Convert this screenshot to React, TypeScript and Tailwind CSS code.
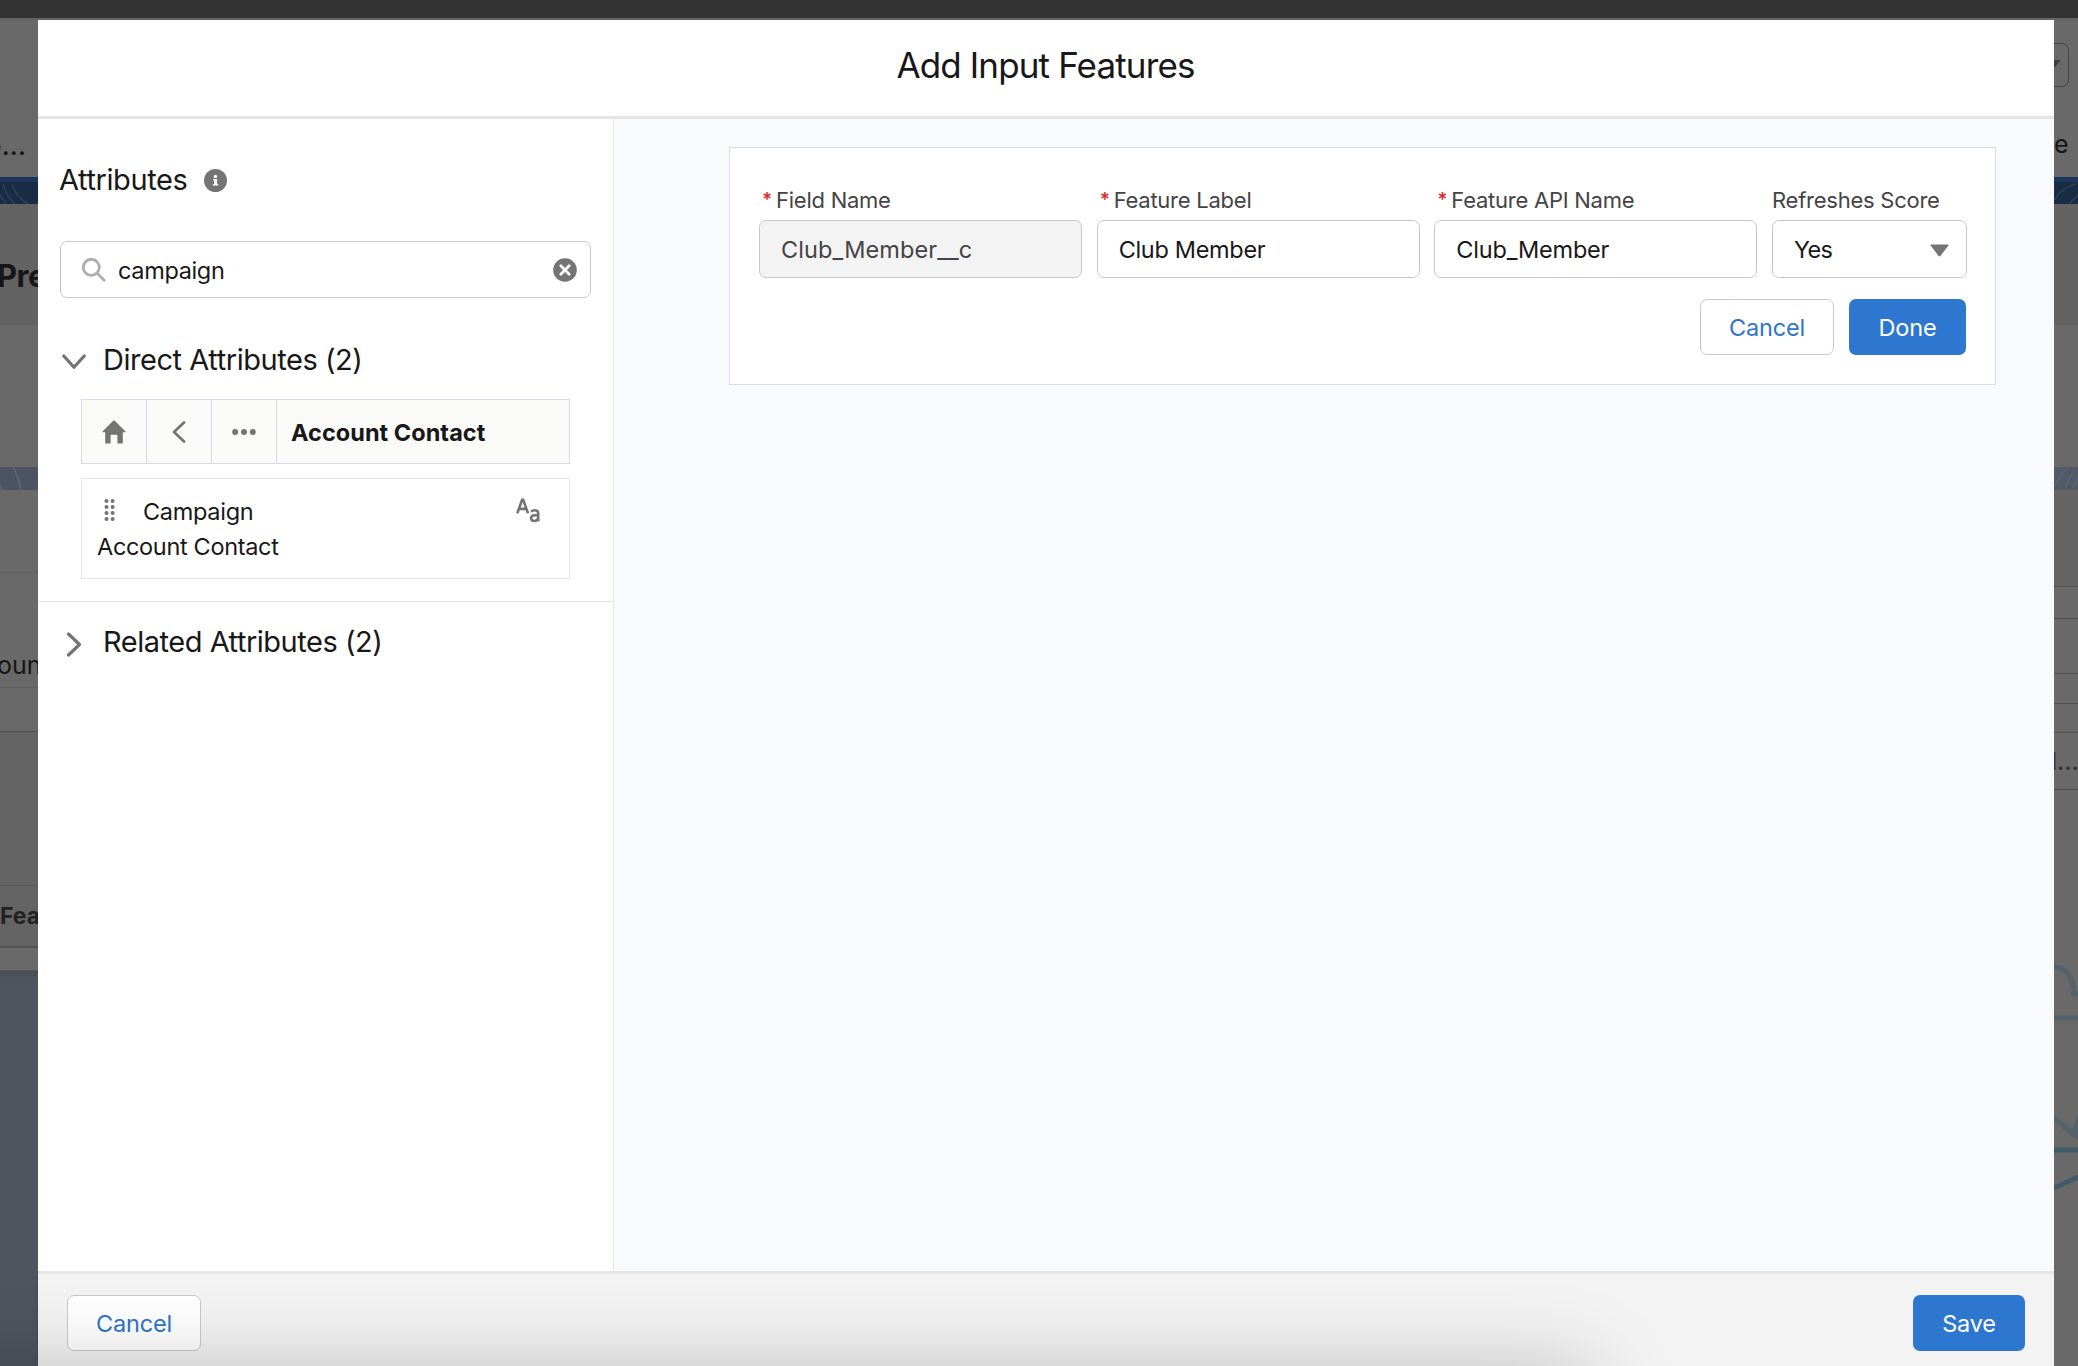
import type { ReactNode } from "react";

function InfoIcon() {
  return (
    <svg width="23" height="23" viewBox="0 0 23 23">
      <circle cx="11.5" cy="11.5" r="11.5" fill="#747474" />
      <circle cx="11.4" cy="7.4" r="1.7" fill="#fff" />
      <path d="M9.2 10h3.9v5h1.1v1.6H8.9V15h1.3v-3.4h-1z" fill="#fff" />
    </svg>
  );
}

function SearchIcon() {
  return (
    <svg width="24" height="24" viewBox="0 0 24 24" fill="none" stroke="#aeaeae">
      <circle cx="9.3" cy="9.3" r="8" strokeWidth="2.8" />
      <path d="M15.2 15.2l7 7" strokeWidth="2.8" strokeLinecap="round" />
    </svg>
  );
}

function ClearIcon() {
  return (
    <svg width="24" height="24" viewBox="0 0 24 24">
      <circle cx="12" cy="12" r="11.8" fill="#747474" />
      <path d="M7.8 7.8l8.4 8.4M16.2 7.8l-8.4 8.4" stroke="#fff" strokeWidth="2.7" strokeLinecap="round" />
    </svg>
  );
}

function HomeIcon() {
  return (
    <svg width="24" height="24" viewBox="0 0 24 24" fill="#747474">
      <path d="M11.2.8a1.1 1.1 0 0 1 1.6 0L23.3 11.3c.4.4.2.9-.4.9h-2.1v10.6c0 .4-.2.6-.6.6h-4.8v-8c0-.4-.2-.6-.6-.6H9.2c-.4 0-.6.2-.6.6v8H3.8c-.4 0-.6-.2-.6-.6V12.2H1.1c-.6 0-.8-.5-.4-.9z" />
    </svg>
  );
}

function TextTypeIcon() {
  return (
    <svg width="24" height="25" viewBox="0 0 24 25" fill="none" stroke="#747474" strokeWidth="2.6">
      <path d="M1.3 15.2L6.1 1.9h1.1L12 15.2M3 10.9h7.3" />
      <path d="M15 13.6c1-.9 2.3-1.3 3.7-1.3 2.3 0 3.5 1.2 3.5 3.3v8M22.2 17.2h-3.4c-2.4 0-3.7 1-3.7 2.9 0 1.8 1.3 2.9 3.2 2.9 2.2 0 3.9-1.4 3.9-3.4" />
    </svg>
  );
}

function DragDots() {
  return (
    <svg width="12" height="24" viewBox="0 0 12 24" fill="#747474">
      {[2, 8, 14, 20].map((y) => (
        <g key={y}>
          <circle cx="2.5" cy={y} r="2" />
          <circle cx="8.6" cy={y} r="2" />
        </g>
      ))}
    </svg>
  );
}

function Field({ label, required = true, children }: { label: string; required?: boolean; children: ReactNode }) {
  return (
    <div className="flex min-w-0 flex-col gap-[5px]">
      <div className="flex h-[30px] items-center whitespace-nowrap text-[22px] leading-[30px] tracking-[-0.25px] text-[#444444]">
        {required && <span className="mr-[5px] ml-[3px] w-[9px] text-[19px] font-semibold text-[#d92d2a]">*</span>}
        <span>{label}</span>
      </div>
      {children}
    </div>
  );
}

const control = "flex h-[58px] items-center rounded-[7px] border border-[#c9c9c9] px-[21px] pt-[2px] text-[23.5px]";
const button = "flex h-[56px] items-center justify-center rounded-[7px] pt-[2px] text-[23.5px] tracking-[-0.2px]";

function LeftBackdrop() {
  return (
    <div className="flex w-[38px] shrink-0 flex-col overflow-hidden bg-[#696969] whitespace-nowrap text-[#161616]">
      <div className="flex h-[157px] shrink-0 items-end justify-end pr-[12px] pb-[13px] text-[26px] leading-[36px] font-medium tracking-[0.2px]">
        <span>o...</span>
      </div>
      <div className="h-[5px] shrink-0 bg-[#1b365e]" />
      <svg className="h-[22px] shrink-0 bg-[#1a2b45]" width="38" height="22" fill="none" stroke="#2d4054" strokeWidth="1.5">
        <path d="M-3 8l9 14M3 2q4 14 12 20M12 2q5 15 17 20" />
      </svg>
      <div className="h-[121px] shrink-0 bg-[#636363] pt-[52px] text-[31px] leading-[40px] font-bold tracking-[-0.5px]">
        <span className="-ml-[3px]">Pre</span>
      </div>
      <div className="h-[142px] shrink-0" />
      <svg className="h-[23px] shrink-0 bg-[#4c5362]" width="38" height="23" fill="none" stroke="#5d6270" strokeWidth="2">
        <path d="M13 0q5 8 8 23M-2 15l4 8" />
      </svg>
      <div className="h-[83px] shrink-0 border-b border-[#5f5f5f]" />
      <div className="h-[115px] shrink-0 border-b border-[#5f5f5f] pt-[74px] text-[25px] leading-[36px]">
        <span className="-ml-[3px]">oun</span>
      </div>
      <div className="h-[44px] shrink-0 border-b border-[#505050]" />
      <div className="h-[154px] shrink-0 border-b border-[#5c5c5c] bg-[#646464]" />
      <div className="h-[62px] shrink-0 border-b-2 border-[#535353] bg-[#646464] pt-[14px] text-[23px] leading-[32px] font-bold text-[#222222]">
        Fea
      </div>
      <div className="h-[23px] shrink-0 border-b border-[#555555]" />
      <div className="grow bg-gradient-to-b from-[#484c56] to-[#4f545f] to-[8px]" />
    </div>
  );
}

function RightBackdrop() {
  return (
    <div className="flex w-[24px] shrink-0 flex-col overflow-hidden bg-[#696969] text-[#161616]">
      <div className="h-[157px] shrink-0 pt-[23px]">
        <div className="-ml-[20px] flex h-[44px] w-[35px] items-center justify-end rounded-[7px] border border-[#454545] pr-[7px]">
          <svg width="18" height="10" viewBox="0 0 18 10">
            <path d="M0 0h18L9 10z" fill="#3e3e3e" />
          </svg>
        </div>
        <div className="mt-[39px] text-[25px] leading-[36px]">e</div>
      </div>
      <div className="h-[5px] shrink-0 bg-[#1b365e]" />
      <svg className="h-[22px] shrink-0 bg-[#1a2b45]" width="24" height="22" fill="none" stroke="#2d4054" strokeWidth="1.5">
        <path d="M0 18Q9 5 22 2M15 22l9-9" />
      </svg>
      <div className="h-[121px] shrink-0 bg-[#636363]" />
      <div className="h-[142px] shrink-0" />
      <svg className="h-[23px] shrink-0 bg-[#525967]" width="24" height="23" fill="none" stroke="#5d6370" strokeWidth="1.5">
        <path d="M1 19Q6 8 13 1M12 19L20 3M19 21l5-12" />
      </svg>
      <div className="h-[97px] shrink-0 border-b border-[#505050] bg-[#646464]" />
      <div className="h-[32px] shrink-0 border-b border-[#505050]" />
      <div className="h-[55px] shrink-0 border-b border-[#505050]" />
      <div className="h-[30px] shrink-0 border-b border-[#505050]" />
      <div className="h-[29px] shrink-0 border-b border-[#505050]" />
      <div className="flex h-[57px] shrink-0 items-center border-b border-[#505050] pt-[1px] text-[24px] font-medium text-[#333333]">
        <span className="-ml-[3px] whitespace-nowrap">l...</span>
      </div>
      <svg className="shrink-0" width="24" height="576" fill="none" strokeWidth="5">
        <g stroke="#55626c">
          <path d="M0 177q19 1 20 27h6" />
          <path d="M0 228h24" />
          <path d="M0 328l24 20" />
        </g>
        <path d="M24 324l-6 16 6 10z" fill="#55626c" />
        <g stroke="#425a69">
          <path d="M0 360h24" />
          <path d="M0 398l24-11" />
        </g>
      </svg>
    </div>
  );
}

function Sidebar() {
  return (
    <aside className="flex w-[576px] shrink-0 flex-col border-r border-[#e5e5e5] bg-white pt-[41px]">
      <div className="flex h-[40px] items-center pl-[21px] text-[29px] leading-[40px] tracking-[-0.4px]">
        <h2>Attributes</h2>
        <span className="ml-[17px]"><InfoIcon /></span>
      </div>
      <div className="mr-[22px] ml-[22px] mt-[41px] flex h-[57px] items-center rounded-[7px] border border-[#c9c9c9] pr-[13px] pl-[21px]">
        <SearchIcon />
        <span className="ml-[12px] grow pt-[2px] text-[23.5px] tracking-[-0.35px]">campaign</span>
        <ClearIcon />
      </div>
      <div className="mt-[42px] flex h-[40px] items-center pl-[24px] text-[29px] leading-[40px] tracking-[-0.45px]">
        <svg className="mt-[3px]" width="24" height="16" fill="none" stroke="#747474" strokeWidth="3.2" strokeLinecap="round" strokeLinejoin="round">
          <path d="M1.8 2L12 13.3 22.2 2" />
        </svg>
        <h3 className="ml-[17px]">Direct Attributes (2)</h3>
      </div>
      <div className="mr-[43px] ml-[43px] mt-[19px] flex h-[65px] border border-[#d8dae4] bg-[#fafaf9]">
        <div className="flex w-[65px] items-center justify-center border-r border-[#d8dae4]"><HomeIcon /></div>
        <div className="flex w-[65px] items-center justify-center border-r border-[#d8dae4]">
          <svg width="14" height="22" fill="none" stroke="#747474" strokeWidth="2.7" strokeLinecap="round" strokeLinejoin="round">
            <path d="M12 1.5L2 11l10 9.5" />
          </svg>
        </div>
        <div className="flex w-[65px] items-center justify-center border-r border-[#d8dae4]">
          <svg width="24" height="8" fill="#747474">
            <circle cx="3.2" cy="4" r="3" />
            <circle cx="12" cy="4" r="3" />
            <circle cx="20.8" cy="4" r="3" />
          </svg>
        </div>
        <div className="flex items-center pt-[2px] pl-[14px] text-[23.5px] font-bold tracking-[0.04px]">Account Contact</div>
      </div>
      <div className="mr-[43px] ml-[43px] mt-[14px] flex h-[101px] flex-col border border-[#e5e5e5] pt-[15px] text-[23.5px] leading-[35px]">
        <div className="flex h-[35px] items-start pr-[29px] pl-[22px]">
          <span className="mt-[5px]"><DragDots /></span>
          <span className="ml-[27px] grow tracking-[-0.3px]">Campaign</span>
          <span className="mt-[4px]"><TextTypeIcon /></span>
        </div>
        <div className="pl-[15px] tracking-[-0.33px]">Account Contact</div>
      </div>
      <div className="mt-[22px] h-px bg-[#e5e5e5]" />
      <div className="mt-[20px] flex h-[40px] items-center pl-[28px] text-[29px] leading-[40px] tracking-[-0.48px]">
        <svg className="mt-[5px]" width="16" height="25" fill="none" stroke="#747474" strokeWidth="3.2" strokeLinecap="round" strokeLinejoin="round">
          <path d="M2.5 2L13.5 12.5 2.5 23" />
        </svg>
        <h3 className="ml-[21px]">Related Attributes (2)</h3>
      </div>
    </aside>
  );
}

export default function App() {
  return (
    <div className="relative flex h-[1366px] w-[2078px] flex-col overflow-hidden bg-[#696969] font-['Inter',sans-serif] text-[#181818]">
      <div className="h-[20px] shrink-0 border-b-2 border-[#646464] bg-[#333333]" />
      <div className="flex min-h-0 grow">
        <LeftBackdrop />
        <div className="flex w-[2016px] shrink-0 flex-col">
          <header className="flex h-[99px] shrink-0 items-center justify-center border-b-[3px] border-[#e5e5e5] bg-white pb-[5px]">
            <h1 className="-ml-[1px] text-[35px] tracking-[-0.86px]">Add Input Features</h1>
          </header>
          <div className="flex min-h-0 grow">
            <Sidebar />
            <main className="grow bg-[#f8fafc] pt-[28px] pr-[58px] pl-[115px]">
              <section className="h-[238px] border border-[#d8dde6] bg-white pt-[37px] pr-[28px] pl-[29px]">
                <div className="grid grid-cols-[323px_323px_323px_195px] gap-x-[14.66px]">
                  <Field label="Field Name">
                    <div className={`${control} bg-[#f3f3f3] tracking-[0.1px] text-[#444444]`}>Club_Member__c</div>
                  </Field>
                  <Field label="Feature Label">
                    <div className={`${control} tracking-[-0.32px]`}>Club Member</div>
                  </Field>
                  <Field label="Feature API Name">
                    <div className={`${control} tracking-[-0.2px]`}>Club_Member</div>
                  </Field>
                  <Field label="Refreshes Score" required={false}>
                    <div className={`${control} justify-between tracking-[-0.7px]`}>
                      Yes
                      <svg className="-mr-[4px] mt-[1px]" width="19" height="15" viewBox="0 0 19 15">
                        <path d="M1.2 1.5h16.6c.7 0 1 .6.6 1.1L10.4 13c-.5.6-1.3.6-1.8 0L.6 2.6c-.4-.5-.1-1.1.6-1.1z" fill="#747474" />
                      </svg>
                    </div>
                  </Field>
                </div>
                <div className="mt-[21px] mr-[1px] flex justify-end gap-[15px]">
                  <div className={`${button} w-[134px] border border-[#c9c9c9] text-[#2e75cc]`}>Cancel</div>
                  <div className={`${button} w-[117px] bg-[#2e77d0] text-white`}>Done</div>
                </div>
              </section>
            </main>
          </div>
          <footer className="flex h-[95px] shrink-0 items-start justify-between border-t-[3px] border-[#e5e5e5] bg-[#f3f3f3] px-[29px] pt-[21px] shadow-[0_4px_4px_rgba(0,0,0,0.16)]">
            <div className={`${button} w-[134px] border border-[#c9c9c9] bg-white text-[#2e75cc]`}>Cancel</div>
            <div className={`${button} w-[112px] bg-[#2e77d0] text-white`}>Save</div>
          </footer>
        </div>
        <RightBackdrop />
      </div>
      <div className="pointer-events-none absolute top-[1376px] -left-[100px] h-[100px] w-[1690px] shadow-[0_0_90px_rgba(0,0,0,0.26)]" />
    </div>
  );
}
